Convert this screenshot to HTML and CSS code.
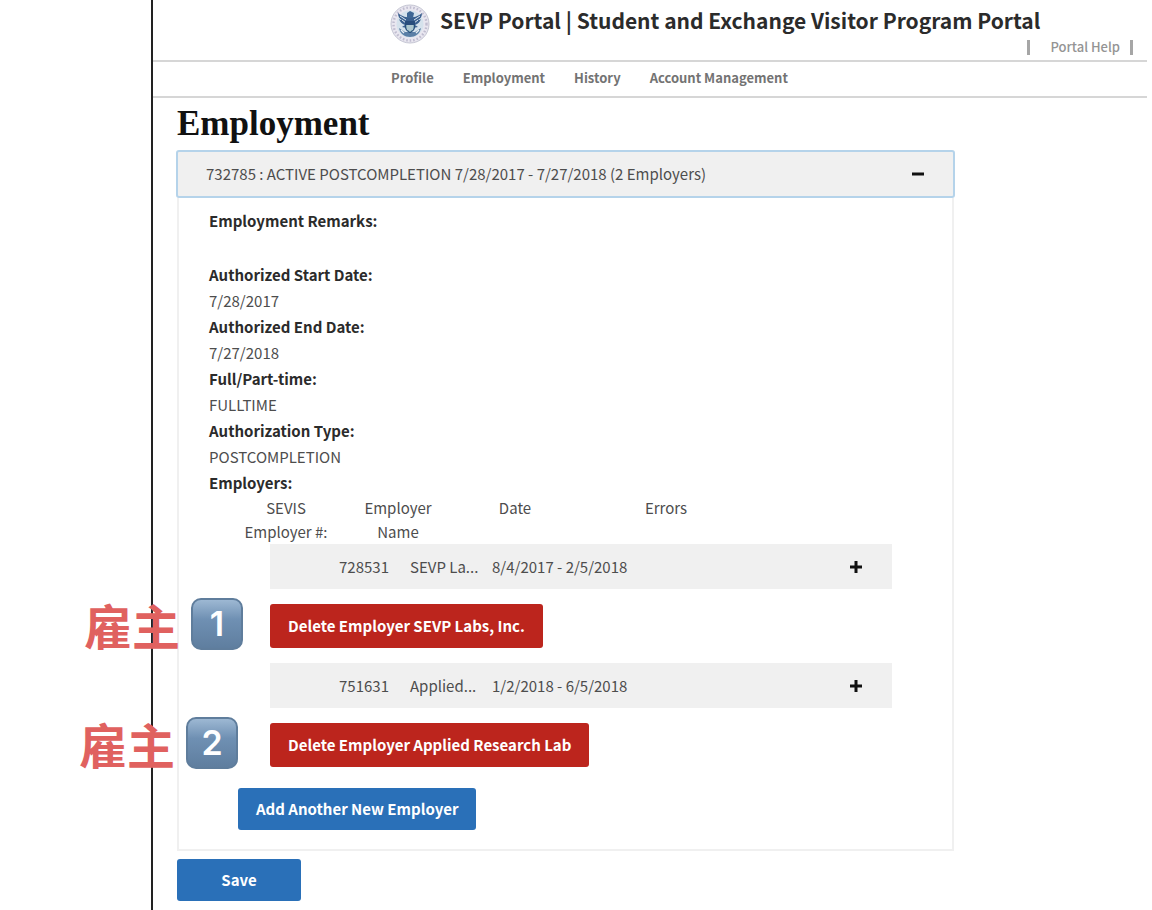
FILE: index.html
```html
<!DOCTYPE html>
<html lang="en">
<head>
    <meta charset="UTF-8">
    <title>SEVP Portal | Employment</title>
    <meta name="viewport" content="width=device-width, initial-scale=1">
    <link rel="stylesheet" href="styles.css">
</head>
<body>
<div class="portal">
    <header class="header">
        <svg class="seal" viewBox="0 0 40 40" aria-hidden="true">
            <circle cx="20" cy="20" r="19" fill="#e9e7f0" stroke="#c3c4d2" stroke-width="1"/>
            <circle cx="20" cy="20" r="16.5" fill="none" stroke="#c0bdd0" stroke-width="2.4" stroke-dasharray="1.6 1.9"/>
            <circle cx="20" cy="20" r="13.5" fill="#d5e2ec"/>
            <path d="M9 24c1 6 6 9 11 9s10-3 11-9l-6 4H15z" fill="#5b7fa6"/>
            <path d="M20 14c-3-1-8-1-12-5 0 4 2 6 4 7-1 0-2 0-3-1 1 3 3 5 6 6l-3 2 5 1 3 5 3-5 5-1-3-2c3-1 5-3 6-6-1 1-2 1-3 1 2-1 4-3 4-7-4 4-9 4-12 5z" fill="#3a608f"/>
            <path d="M17 9l3-2 4 2-1 5h-6z" fill="#3f6795"/>
            <path d="M10 12l6 4M30 12l-6 4M12 16l4 3M28 16l-4 3" stroke="#dfe9f2" stroke-width="1"/>
            <path d="M15 17h10v6c0 4-5 6-5 6s-5-2-5-6z" fill="#284d7c"/>
            <path d="M16 21h8v2c0 3-4 5-4 5s-4-2-4-5z" fill="#7fa7b4"/>
            <path d="M18 21v5M20 21v6M22 21v5" stroke="#f2f5f7" stroke-width=".8"/>
            <path d="M11 26l3 3M29 26l-3 3" stroke="#e8eef4" stroke-width="1.4"/>
        </svg>
        <div class="brand">
            <div class="site-title">SEVP Portal | Student and Exchange Visitor Program Portal</div>
            <div class="help"><a href="#help">Portal Help</a></div>
        </div>
    </header>
    <nav class="nav">
        <a href="#profile">Profile</a>
        <a href="#employment">Employment</a>
        <a href="#history">History</a>
        <a href="#account">Account Management</a>
    </nav>

    <main class="content">
        <h1>Employment</h1>
        <button class="accordion" type="button" aria-expanded="true" aria-controls="opt">
            <span>732785 : ACTIVE POSTCOMPLETION 7/28/2017 - 7/27/2018 (2 Employers)</span>
            <svg class="sign" viewBox="0 0 14 14" aria-hidden="true"><path d="M1 7h12"/></svg>
        </button>
        <section class="panel" id="opt">
            <dl class="details remarks">
                <dt>Employment Remarks:</dt>
                <dd></dd>
            </dl>
            <dl class="details">
                <dt>Authorized Start Date:</dt>
                <dd>7/28/2017</dd>
                <dt>Authorized End Date:</dt>
                <dd>7/27/2018</dd>
                <dt>Full/Part-time:</dt>
                <dd>FULLTIME</dd>
                <dt>Authorization Type:</dt>
                <dd>POSTCOMPLETION</dd>
                <dt>Employers:</dt>
            </dl>

            <div class="employer-head">
                <div>SEVIS<br>Employer #:</div>
                <div>Employer<br>Name</div>
                <div>Date</div>
                <div>Errors</div>
            </div>
            <div class="employers">
                <button class="employer" type="button" aria-expanded="false">
                    <span>728531</span>
                    <span>SEVP La...</span>
                    <span>8/4/2017 - 2/5/2018</span>
                    <svg class="sign" viewBox="0 0 14 14" aria-hidden="true"><path d="M1 7h12M7 1v12"/></svg>
                </button>
                <div class="employer-actions">
                    <div class="note"><span lang="zh">雇主</span><span class="keycap">1</span></div>
                    <button class="btn btn-delete" type="button">Delete Employer SEVP Labs, Inc.</button>
                </div>
                <button class="employer" type="button" aria-expanded="false">
                    <span>751631</span>
                    <span>Applied...</span>
                    <span>1/2/2018 - 6/5/2018</span>
                    <svg class="sign" viewBox="0 0 14 14" aria-hidden="true"><path d="M1 7h12M7 1v12"/></svg>
                </button>
                <div class="employer-actions">
                    <div class="note note-second"><span lang="zh">雇主</span><span class="keycap">2</span></div>
                    <button class="btn btn-delete" type="button">Delete Employer Applied Research Lab</button>
                </div>
            </div>
            <button class="btn btn-add" type="button">Add Another New Employer</button>
        </section>
        <button class="btn btn-save" type="button">Save</button>
    </main>
</div>
</body>
</html>
```

FILE: styles.css
```css
* {
    box-sizing: border-box;
}

body {
    margin: 0;
    background: #fff;
    color: #4d4d4d;
    font-family: "Noto Sans CJK SC", "Open Sans", sans-serif;
    font-size: 15px;
    line-height: 26px;
}

button {
    font: inherit;
    color: inherit;
    cursor: pointer;
}

a {
    color: inherit;
    text-decoration: none;
}

.portal {
    margin: 0 5px 0 151px;
    border-left: 2px solid #222;
    min-height: 100vh;
}

/* header */
.header {
    display: flex;
    gap: 10px;
    padding: 4px 14px 2px 237px;
    border-bottom: 2px solid #d6d6d6;
}

.seal {
    flex: none;
    width: 40px;
    height: 40px;
}

.brand {
    flex: 1;
}

.site-title {
    color: #2b2b2b;
    font-size: 21px;
    font-weight: bold;
    line-height: 32px;
}

.help {
    display: flex;
    justify-content: flex-end;
    color: #949494;
    font-size: 13px;
    line-height: 22px;
}

.help a {
    display: flex;
    align-items: center;
    font-weight: 500;
}

.help a::before,
.help a::after {
    content: "";
    width: 3px;
    height: 15px;
    background: #a6a6a6;
}

.help a::before {
    margin-right: 20px;
}

.help a::after {
    margin-left: 10px;
}

.nav {
    display: flex;
    gap: 29px;
    padding: 3px 0 5px 238px;
    border-bottom: 2px solid #d6d6d6;
    color: #737373;
    font-size: 13px;
    font-weight: bold;
}

/* employment */
.content {
    max-width: 802px;
    padding: 0 0 9px 23px;
}

h1 {
    margin: 0;
    padding: 6px 0 6px 1px;
    color: #111;
    font-family: "Liberation Serif", serif;
    font-size: 35px;
    line-height: 40px;
}

.accordion {
    display: flex;
    align-items: center;
    justify-content: space-between;
    width: 100%;
    height: 48px;
    padding: 0 28px;
    border: 2px solid #b5d3ea;
    border-radius: 3px;
    background: #f0f0f0;
}

.sign {
    width: 14px;
    height: 14px;
    fill: none;
    stroke: #111;
    stroke-width: 3;
}

.panel {
    margin: 0 1px;
    padding: 10px 60px 19px 30px;
    border: 2px solid #f0f0f0;
    border-top: 0;
}

.details {
    margin: 0;
}

.remarks {
    margin-bottom: 2px;
}

.details dt {
    color: #2b2b2b;
    font-weight: bold;
}

.details dd {
    margin: 0;
    min-height: 26px;
}

.employer-head {
    display: grid;
    grid-template-columns: 100px 124px 110px 192px;
    margin-left: 27px;
    line-height: 24px;
    text-align: center;
}

.employers {
    margin-left: 61px;
}

.employer {
    display: grid;
    grid-template-columns: 71px 82px 1fr auto;
    align-items: center;
    width: 100%;
    height: 45px;
    padding: 0 29px 0 69px;
    border: 0;
    background: #f0f0f0;
    text-align: left;
}

.employer-actions {
    position: relative;
    padding: 15px 0;
}

.btn {
    display: block;
    height: 42px;
    padding: 0 18px;
    border: 0;
    border-radius: 3px;
    background: #2a70b8;
    color: #fff;
    font-weight: bold;
}

.btn-delete {
    height: 44px;
    background: #bc251d;
}

.btn-add {
    margin: 6px 0 0 29px;
}

.btn-save {
    min-width: 124px;
    margin: 8px 0 0 1px;
}

/* red labels lying over the form */
.note {
    position: absolute;
    top: 9px;
    left: -186px;
    display: flex;
    align-items: center;
    gap: 11px;
    color: #e0615f;
    font-size: 48px;
    font-weight: bold;
    line-height: 52px;
    white-space: nowrap;
}

.note-second {
    left: -191px;
}

.keycap {
    width: 52px;
    height: 52px;
    border: 2px solid #5f7d9c;
    border-radius: 10px;
    background: linear-gradient(#9db8d3, #6f90b3 40%, #5f7e9f);
    color: #fff;
    font-family: Inter, sans-serif;
    font-size: 34px;
    font-weight: 600;
    line-height: 48px;
    text-align: center;
}
```
